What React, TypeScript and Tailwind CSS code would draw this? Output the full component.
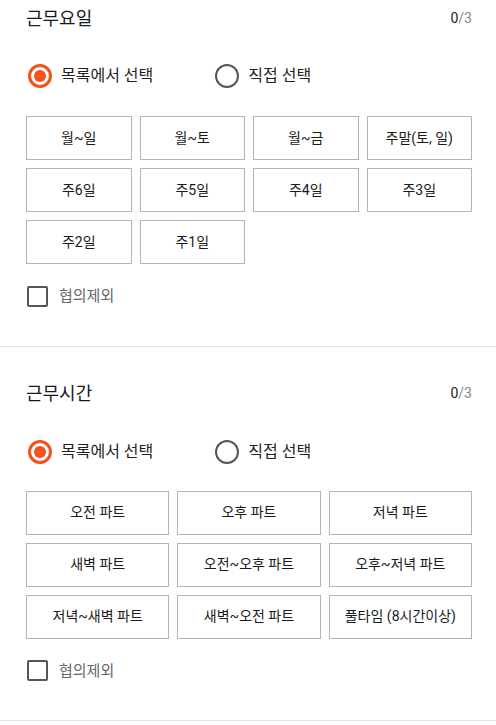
const dayOptions = ["월~일", "월~토", "월~금", "주말(토, 일)", "주6일", "주5일", "주4일", "주3일", "주2일", "주1일"];
const timeOptions = [
  "오전 파트",
  "오후 파트",
  "저녁 파트",
  "새벽 파트",
  "오전~오후 파트",
  "오후~저녁 파트",
  "저녁~새벽 파트",
  "새벽~오전 파트",
  "풀타임 (8시간이상)",
];

function Radio({ checked, label }: { checked?: boolean; label: string }) {
  return (
    <label className="flex items-center gap-[9px]">
      <span
        className={
          checked
            ? "w-[24px] h-[24px] rounded-full border-[3px] border-[#f4511e] flex items-center justify-center"
            : "w-[24px] h-[24px] rounded-full border-[2.5px] border-[#555555] flex items-center justify-center"
        }
      >
        {checked && <span className="w-[12px] h-[12px] rounded-full bg-[#f4511e]" />}
      </span>
      <span className="text-[16px] text-[#222222]">{label}</span>
    </label>
  );
}

function Section({
  title,
  options,
  cols,
}: {
  title: string;
  options: string[];
  cols: "4" | "3";
}) {
  return (
    <section className="border-b border-[#e2e2e6] pl-[26px] pr-[24px] pb-[38px]">
      <div className="flex items-center justify-between h-[36px]">
        <h2 className="text-[18px] text-[#1a1a1a] font-normal">{title}</h2>
        <span className="text-[14px] text-[#222222]">
          0<span className="text-[#888888]">/3</span>
        </span>
      </div>

      <div className="flex items-center gap-[62px] mt-[28px] pl-[2px]">
        <Radio checked label="목록에서 선택" />
        <Radio label="직접 선택" />
      </div>

      <div
        className={
          cols === "4"
            ? "grid grid-cols-4 gap-[8px] mt-[28px]"
            : "grid grid-cols-3 gap-[8px] mt-[27px]"
        }
      >
        {options.map((o) => (
          <button
            key={o}
            className="h-[44px] border border-[#b4b4b8] bg-white text-[14px] text-[#1a1a1a] flex items-center justify-center"
          >
            {o}
          </button>
        ))}
      </div>

      <label className="flex items-center gap-[11px] mt-[21px] pl-[1px]">
        <span className="w-[21px] h-[21px] border-[2.5px] border-[#555555] rounded-[2px]" />
        <span className="text-[15px] text-[#666666]">협의제외</span>
      </label>
    </section>
  );
}

export default function App() {
  return (
    <div
      className="bg-white w-[496px] min-h-[725px] overflow-hidden"
      style={{ fontFamily: "Roboto, 'Noto Sans CJK KR', sans-serif" }}
    >
      <Section title="근무요일" options={dayOptions} cols="4" />
      <div className="pt-[29px]">
        <Section title="근무시간" options={timeOptions} cols="3" />
      </div>
    </div>
  );
}
